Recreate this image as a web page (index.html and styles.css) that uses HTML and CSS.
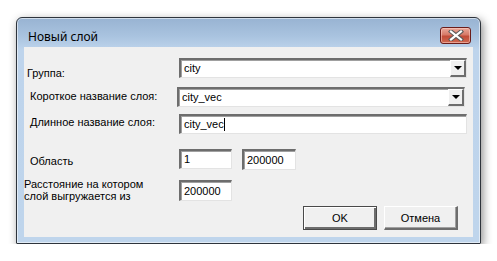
FILE: index.html
```html
<!DOCTYPE html>
<html lang="ru">
<head>
    <meta charset="UTF-8">
    <title>Новый слой</title>
    <link rel="stylesheet" href="styles.css">
</head>
<body>
    <div class="window">
        <div class="titlebar">
            <span class="title">Новый слой</span>
            <button class="close-btn" aria-label="Закрыть">
                <svg width="16" height="11" viewBox="0 0 16 11">
                    <path d="M3 1.5 L13 9.5 M13 1.5 L3 9.5" stroke="#5a5a5a" stroke-width="4.2" stroke-linecap="square"/>
                    <path d="M3 1.5 L13 9.5 M13 1.5 L3 9.5" stroke="#fff" stroke-width="2.2" stroke-linecap="square"/>
                </svg>
            </button>
        </div>
        <div class="client">
            <div class="row row-group">
                <label class="label">Группа:</label>
                <div class="combo">
                    <span class="value">city</span>
                    <span class="drop"><i class="arrow"></i></span>
                </div>
            </div>
            <div class="row row-short">
                <label class="label">Короткое название слоя:</label>
                <div class="combo">
                    <span class="value">city_vec</span>
                    <span class="drop"><i class="arrow"></i></span>
                </div>
            </div>
            <div class="row row-long">
                <label class="label">Длинное название слоя:</label>
                <div class="field wide">
                    <span class="value">city_vec</span><span class="caret"></span>
                </div>
            </div>
            <div class="row row-area">
                <label class="label">Область</label>
                <div class="field small"><span class="value">1</span></div>
                <div class="field small second"><span class="value">200000</span></div>
            </div>
            <div class="row row-dist">
                <label class="label">Расстояние на котором<br>слой выгружается из</label>
                <div class="field small"><span class="value">200000</span></div>
            </div>
            <div class="buttons">
                <button class="btn default">OK</button>
                <button class="btn">Отмена</button>
            </div>
        </div>
    </div>
</body>
</html>
```

FILE: styles.css
```css
body {
    margin: 0;
    padding: 17px 0 0 16px;
    background: #fff;
    font-family: "Liberation Sans", Arial, sans-serif;
    font-size: 11px;
    color: #000;
}

.window {
    box-sizing: border-box;
    width: 465px;
    height: 227px;
    border: 1px solid #2e343c;
    border-radius: 6px 6px 1px 1px;
    padding: 0 7px 6px 7px;
    background: linear-gradient(to bottom, #98b3d2 0px, #a9c3df 18px, #bed4ec 32px, #bfd5ec 100%);
    box-shadow: 2px 3px 10px rgba(0, 0, 0, 0.45), inset 0 0 0 1px rgba(255, 255, 255, 0.55);
    display: flex;
    flex-direction: column;
}

.titlebar {
    height: 29px;
    display: flex;
    align-items: flex-start;
    justify-content: space-between;
}

.title {
    font-family: "Noto Sans", "Open Sans", sans-serif;
    font-size: 12px;
    line-height: 16px;
    margin: 11px 0 0 4px;
}

.close-btn {
    box-sizing: border-box;
    width: 31px;
    height: 17px;
    margin: 9px 2px 0 0;
    padding: 0;
    border: 1px solid #6b1d1a;
    border-radius: 3px;
    background: linear-gradient(to bottom, #e9a99b 0%, #d77a68 45%, #c24c38 55%, #cf6a52 100%);
    box-shadow: inset 0 0 0 1px rgba(255, 210, 200, 0.55);
    display: flex;
    align-items: center;
    justify-content: center;
}

.client {
    flex: 1;
    background: #f0f0f0;
    display: flex;
    flex-direction: column;
    padding-top: 11px;
}

.row {
    display: flex;
    align-items: flex-start;
    height: 20px;
}

.label {
    line-height: 13px;
    white-space: nowrap;
}

.row-group .label {
    width: 152px;
    padding-left: 3px;
    margin-top: 9px;
}

.row-short {
    margin-top: 9px;
}

.row-short .label {
    width: 147px;
    padding-left: 6px;
    margin-top: 3px;
}

.row-long {
    margin-top: 7px;
}

.row-long .label {
    width: 149px;
    padding-left: 6px;
    margin-top: 2px;
}

.row-area {
    margin-top: 15px;
}

.row-area .label {
    width: 149px;
    padding-left: 6px;
    margin-top: 6px;
}

.row-dist {
    margin-top: 8px;
    height: 26px;
}

.row-dist .label {
    width: 155px;
    line-height: 12px;
    margin-top: 1px;
}

.row-dist .field {
    margin-top: 3px;
    height: 21px;
}

.combo,
.field {
    box-sizing: border-box;
    height: 20px;
    background: #fff;
    border-style: solid;
    border-width: 2px 1px 1px 2px;
    border-color: #6d6d6d #e3e3e3 #e3e3e3 #6d6d6d;
    box-shadow: inset 1px 1px 0 #a0a0a0;
    display: flex;
    align-items: center;
}

.combo {
    width: 288px;
}

.value {
    padding-left: 3px;
    line-height: 13px;
}

.drop {
    box-sizing: border-box;
    width: 16px;
    height: 17px;
    margin-left: auto;
    background: #f0f0f0;
    border-style: solid;
    border-width: 1px 2px 2px 1px;
    border-color: #fff #6d6d6d #6d6d6d #fff;
    display: flex;
    align-items: center;
    justify-content: center;
}

.arrow {
    width: 0;
    height: 0;
    border-left: 4px solid transparent;
    border-right: 4px solid transparent;
    border-top: 4px solid #000;
}

.field.wide {
    width: 288px;
}

.caret {
    width: 1px;
    height: 13px;
    background: #000;
}

.field.small {
    width: 53px;
}

.field.small.second {
    width: 54px;
    height: 21px;
    margin-left: 10px;
}

.buttons {
    display: flex;
    justify-content: flex-end;
    gap: 7px;
    margin-top: 3px;
    padding-right: 15px;
}

.btn {
    box-sizing: border-box;
    width: 74px;
    height: 24px;
    padding: 0;
    font-family: "Liberation Sans", Arial, sans-serif;
    font-size: 11px;
    color: #000;
    background: #f0f0f0;
    border-style: solid;
    border-width: 1px 2px 2px 1px;
    border-color: #fff #6d6d6d #6d6d6d #fff;
    box-shadow: inset -1px -1px 0 #a0a0a0;
}

.btn.default {
    border: 1px solid #4a4a4a;
    box-shadow: inset 1px 1px 0 #fff, inset -2px -2px 0 #6d6d6d;
}
```
